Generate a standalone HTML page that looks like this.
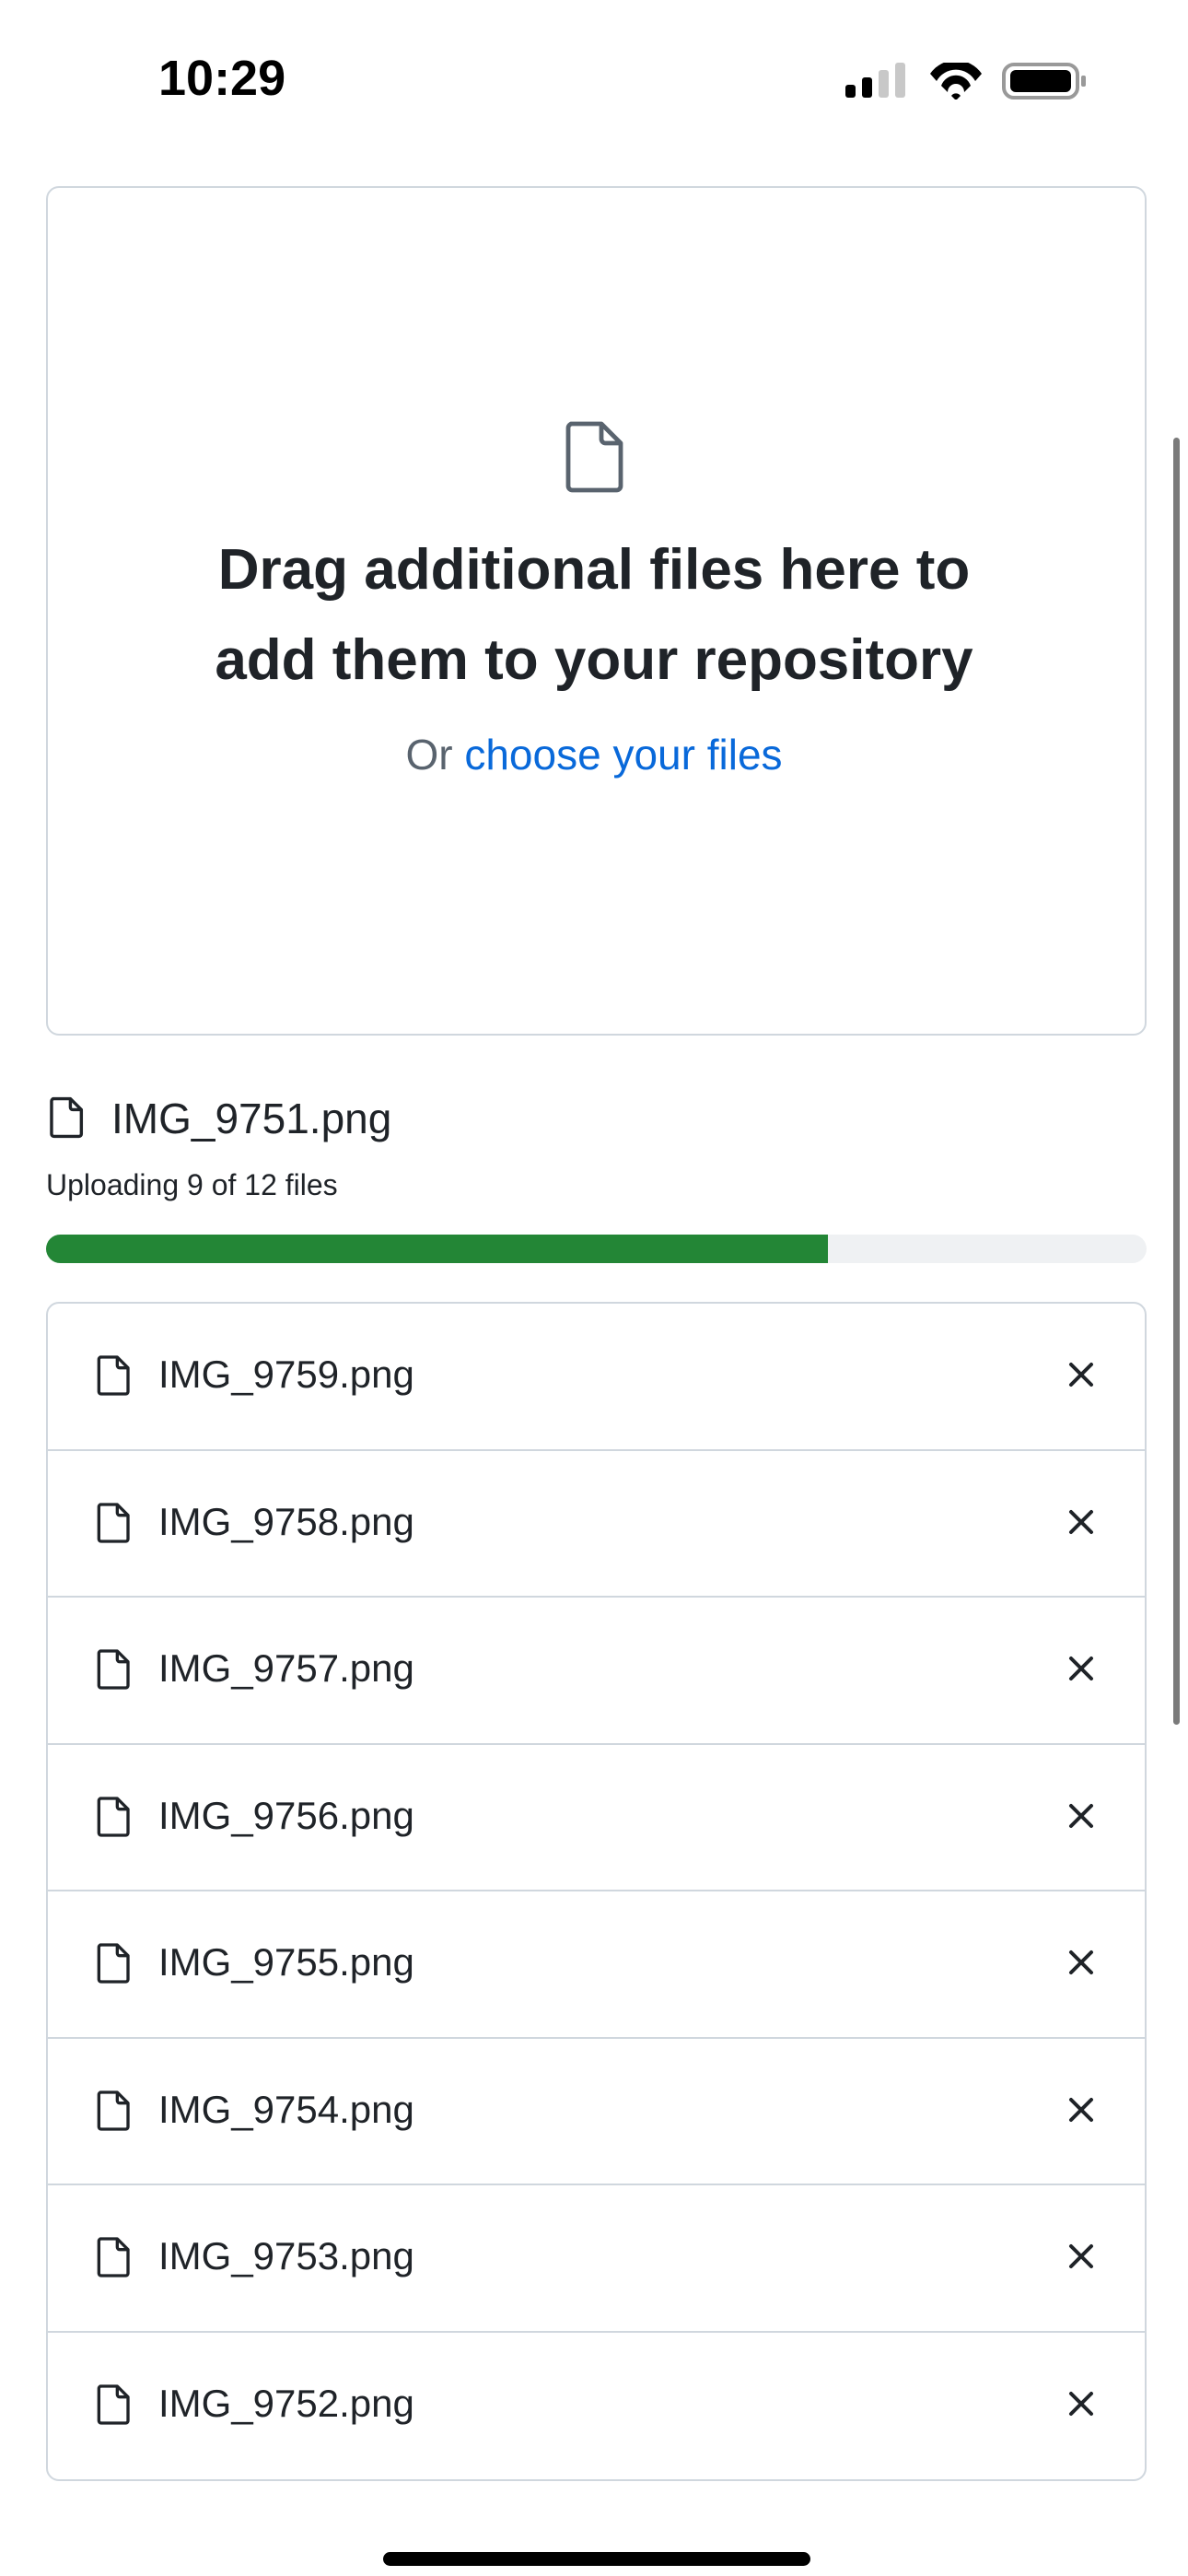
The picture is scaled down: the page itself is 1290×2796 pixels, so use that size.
<!DOCTYPE html>
<html><head><meta charset="utf-8"><style>
*{margin:0;padding:0;box-sizing:border-box}
body{width:1290px;height:2796px;background:#fff;position:relative;overflow:hidden;font-family:"Liberation Sans",sans-serif;color:#1f2328}
.abs{position:absolute}
.drop{left:50px;top:202px;width:1195px;height:922px;border:2px solid #d0d7de;border-radius:14px}
.h{left:0;width:1290px;text-align:center;font-weight:bold;font-size:62px;color:#1f2328}
.list{left:50px;top:1413px;width:1195px;height:1280px;border:2px solid #d0d7de;border-radius:14px;overflow:hidden}
.row{height:159.5px;border-bottom:2px solid #d0d7de;position:relative}
.row:last-child{border-bottom:none}
.row svg.f{position:absolute;left:52px;top:55px}
.row span{position:absolute;left:120px;top:53px;font-size:42px}
.row svg.x{position:absolute;left:1108px;top:63px}
</style></head><body>
<div class="abs" style="left:172px;top:54px;font-size:54px;font-weight:bold;color:#000">10:29</div>
<svg class="abs" style="left:918px;top:68px" width="270" height="40" viewBox="0 0 270 40">
<rect x="0" y="24" width="11" height="14" rx="3" fill="#000"/>
<rect x="18" y="16" width="11" height="22" rx="3" fill="#000"/>
<rect x="36" y="8" width="11" height="30" rx="3" fill="#c8c8c8"/>
<rect x="54" y="0" width="11" height="38" rx="3" fill="#c8c8c8"/>
<path d="M92 12 A34 34 0 0 1 148 12 L141 20 A24 24 0 0 0 99 20Z M104 25 A17 17 0 0 1 136 25 L129 32 A8 8 0 0 0 111 32Z M115 36 L120 41 L125 36 A6 6 0 0 0 115 36Z" fill="#000"/>
<rect x="172" y="2" width="80" height="36" rx="11" fill="none" stroke="#999" stroke-width="4"/>
<rect x="179" y="8" width="66" height="24" rx="6" fill="#000"/>
<rect x="256" y="14" width="5" height="12" rx="2" fill="#999"/>
</svg>
<div class="abs drop"></div>
<svg class="abs" style="left:611px;top:455px" width="72" height="82" viewBox="0 0 24 27"><path d="M3 1.5h11l7 7v15.5a1.5 1.5 0 0 1-1.5 1.5h-16a1.5 1.5 0 0 1-1.5-1.5v-21a1.5 1.5 0 0 1 1.5-1.5z M14 1.5v5.5a1.5 1.5 0 0 0 1.5 1.5h5.5" fill="none" stroke="#59636e" stroke-width="1.6" stroke-linejoin="round"/></svg>
<div class="abs h" style="top:583px">Drag additional files here to</div>
<div class="abs h" style="top:681px">add them to your repository</div>
<div class="abs" style="left:0;width:1290px;text-align:center;top:792px;font-size:46px;color:#59636e">Or <span style="color:#0969da">choose your files</span></div>
<svg class="abs" style="left:52px;top:1190px" width="42" height="46" viewBox="0 0 24 27"><path d="M3 1.5h11l7 7v15.5a1.5 1.5 0 0 1-1.5 1.5h-16a1.5 1.5 0 0 1-1.5-1.5v-21a1.5 1.5 0 0 1 1.5-1.5z M14 1.5v5.5a1.5 1.5 0 0 0 1.5 1.5h5.5" fill="none" stroke="#1f2328" stroke-width="2" stroke-linejoin="round"/></svg>
<div class="abs" style="left:121px;top:1187px;font-size:46px">IMG_9751.png</div>
<div class="abs" style="left:50px;top:1268px;font-size:32px">Uploading 9 of 12 files</div>
<div class="abs" style="left:50px;top:1340px;width:1195px;height:31px;border-radius:16px;background:#eff1f3;overflow:hidden"><div style="width:849px;height:100%;background:#238636"></div></div>
<div class="abs list">
<div class="row"><svg class="f" width="40" height="46" viewBox="0 0 24 27"><path d="M3 1.5h11l7 7v15.5a1.5 1.5 0 0 1-1.5 1.5h-16a1.5 1.5 0 0 1-1.5-1.5v-21a1.5 1.5 0 0 1 1.5-1.5z M14 1.5v5.5a1.5 1.5 0 0 0 1.5 1.5h5.5" fill="none" stroke="#1f2328" stroke-width="2" stroke-linejoin="round"/></svg><span>IMG_9759.png</span><svg class="x" width="28" height="28"><path d="M3 3L25 25M25 3L3 25" stroke="#1f2328" stroke-width="4" stroke-linecap="round"/></svg></div>
<div class="row"><svg class="f" width="40" height="46" viewBox="0 0 24 27"><path d="M3 1.5h11l7 7v15.5a1.5 1.5 0 0 1-1.5 1.5h-16a1.5 1.5 0 0 1-1.5-1.5v-21a1.5 1.5 0 0 1 1.5-1.5z M14 1.5v5.5a1.5 1.5 0 0 0 1.5 1.5h5.5" fill="none" stroke="#1f2328" stroke-width="2" stroke-linejoin="round"/></svg><span>IMG_9758.png</span><svg class="x" width="28" height="28"><path d="M3 3L25 25M25 3L3 25" stroke="#1f2328" stroke-width="4" stroke-linecap="round"/></svg></div>
<div class="row"><svg class="f" width="40" height="46" viewBox="0 0 24 27"><path d="M3 1.5h11l7 7v15.5a1.5 1.5 0 0 1-1.5 1.5h-16a1.5 1.5 0 0 1-1.5-1.5v-21a1.5 1.5 0 0 1 1.5-1.5z M14 1.5v5.5a1.5 1.5 0 0 0 1.5 1.5h5.5" fill="none" stroke="#1f2328" stroke-width="2" stroke-linejoin="round"/></svg><span>IMG_9757.png</span><svg class="x" width="28" height="28"><path d="M3 3L25 25M25 3L3 25" stroke="#1f2328" stroke-width="4" stroke-linecap="round"/></svg></div>
<div class="row"><svg class="f" width="40" height="46" viewBox="0 0 24 27"><path d="M3 1.5h11l7 7v15.5a1.5 1.5 0 0 1-1.5 1.5h-16a1.5 1.5 0 0 1-1.5-1.5v-21a1.5 1.5 0 0 1 1.5-1.5z M14 1.5v5.5a1.5 1.5 0 0 0 1.5 1.5h5.5" fill="none" stroke="#1f2328" stroke-width="2" stroke-linejoin="round"/></svg><span>IMG_9756.png</span><svg class="x" width="28" height="28"><path d="M3 3L25 25M25 3L3 25" stroke="#1f2328" stroke-width="4" stroke-linecap="round"/></svg></div>
<div class="row"><svg class="f" width="40" height="46" viewBox="0 0 24 27"><path d="M3 1.5h11l7 7v15.5a1.5 1.5 0 0 1-1.5 1.5h-16a1.5 1.5 0 0 1-1.5-1.5v-21a1.5 1.5 0 0 1 1.5-1.5z M14 1.5v5.5a1.5 1.5 0 0 0 1.5 1.5h5.5" fill="none" stroke="#1f2328" stroke-width="2" stroke-linejoin="round"/></svg><span>IMG_9755.png</span><svg class="x" width="28" height="28"><path d="M3 3L25 25M25 3L3 25" stroke="#1f2328" stroke-width="4" stroke-linecap="round"/></svg></div>
<div class="row"><svg class="f" width="40" height="46" viewBox="0 0 24 27"><path d="M3 1.5h11l7 7v15.5a1.5 1.5 0 0 1-1.5 1.5h-16a1.5 1.5 0 0 1-1.5-1.5v-21a1.5 1.5 0 0 1 1.5-1.5z M14 1.5v5.5a1.5 1.5 0 0 0 1.5 1.5h5.5" fill="none" stroke="#1f2328" stroke-width="2" stroke-linejoin="round"/></svg><span>IMG_9754.png</span><svg class="x" width="28" height="28"><path d="M3 3L25 25M25 3L3 25" stroke="#1f2328" stroke-width="4" stroke-linecap="round"/></svg></div>
<div class="row"><svg class="f" width="40" height="46" viewBox="0 0 24 27"><path d="M3 1.5h11l7 7v15.5a1.5 1.5 0 0 1-1.5 1.5h-16a1.5 1.5 0 0 1-1.5-1.5v-21a1.5 1.5 0 0 1 1.5-1.5z M14 1.5v5.5a1.5 1.5 0 0 0 1.5 1.5h5.5" fill="none" stroke="#1f2328" stroke-width="2" stroke-linejoin="round"/></svg><span>IMG_9753.png</span><svg class="x" width="28" height="28"><path d="M3 3L25 25M25 3L3 25" stroke="#1f2328" stroke-width="4" stroke-linecap="round"/></svg></div>
<div class="row"><svg class="f" width="40" height="46" viewBox="0 0 24 27"><path d="M3 1.5h11l7 7v15.5a1.5 1.5 0 0 1-1.5 1.5h-16a1.5 1.5 0 0 1-1.5-1.5v-21a1.5 1.5 0 0 1 1.5-1.5z M14 1.5v5.5a1.5 1.5 0 0 0 1.5 1.5h5.5" fill="none" stroke="#1f2328" stroke-width="2" stroke-linejoin="round"/></svg><span>IMG_9752.png</span><svg class="x" width="28" height="28"><path d="M3 3L25 25M25 3L3 25" stroke="#1f2328" stroke-width="4" stroke-linecap="round"/></svg></div>
</div>
<div class="abs" style="left:1274px;top:475px;width:7px;height:1397px;border-radius:4px;background:#7a7a7a"></div>
<div class="abs" style="left:416px;top:2770px;width:464px;height:15px;border-radius:8px;background:#000"></div>
</body></html>
